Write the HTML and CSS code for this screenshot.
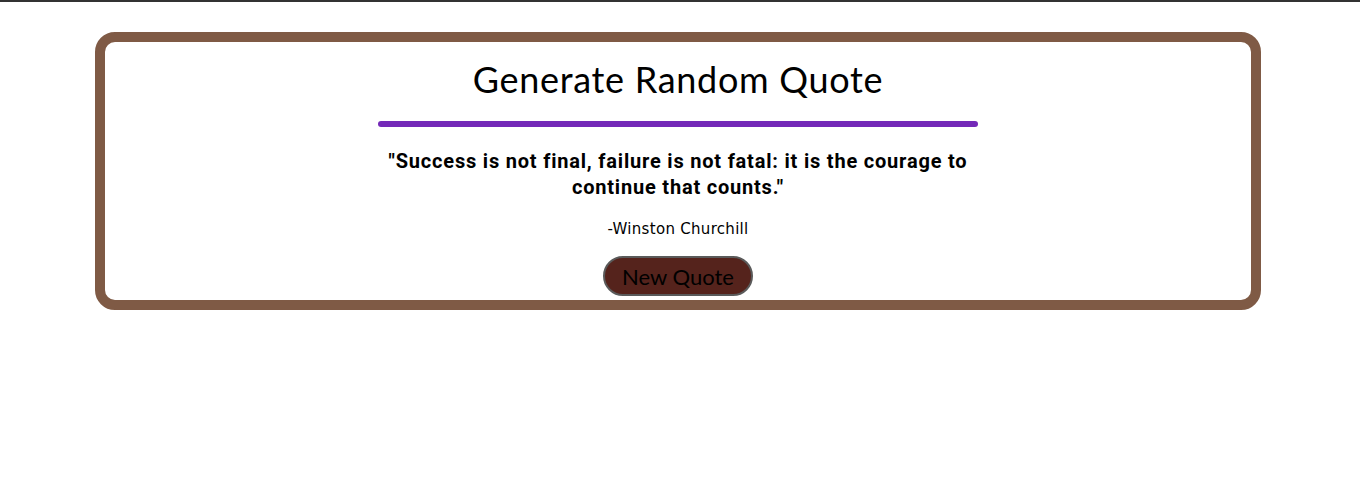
FILE: index.html
```html
<!DOCTYPE html>
<html>
<head>
<meta charset="utf-8">
<link rel="stylesheet" href="styles.css">
</head>
<body>
<div class="topline"></div>
<main class="card">
  <h1 class="title">Generate Random Quote</h1>
  <div class="bar"></div>
  <p class="quote">"Success is not final, failure is not fatal: it is the courage to continue that counts."</p>
  <p class="author">-Winston Churchill</p>
  <button class="btn">New Quote</button>
</main>
</body>
</html>
```
FILE: styles.css
```css
html, body {
  margin: 0;
  padding: 0;
  background: #ffffff;
}
body {
  width: 1360px;
  height: 486px;
  overflow: hidden;
}
.topline {
  height: 2px;
  background: #333333;
}
.card {
  box-sizing: border-box;
  margin: 30px 0 0 95px;
  width: 1166px;
  height: 278px;
  border: 10px solid #7f5a45;
  border-radius: 20px;
  display: flex;
  flex-direction: column;
  align-items: center;
  padding-top: 17px;
}
.title {
  margin: 0;
  font-family: "Lato", "Noto Sans", sans-serif;
  font-weight: 400;
  font-size: 36px;
  line-height: 40px;
  letter-spacing: 0.7px;
  color: #000;
}
.bar {
  width: 600px;
  height: 6px;
  border-radius: 3px;
  background: #7429b8;
  margin-top: 22px;
}
.quote {
  margin: 21px 0 0;
  width: 610px;
  text-align: center;
  font-family: "Roboto", "Liberation Sans", sans-serif;
  font-weight: 700;
  font-size: 20px;
  line-height: 26px;
  letter-spacing: 0.8px;
  color: #000;
}
.author {
  margin: 20px 0 0;
  font-family: "DejaVu Sans", sans-serif;
  font-size: 15px;
  line-height: 18px;
  letter-spacing: 0.3px;
  color: #000;
}
.btn {
  margin-top: 18px;
  width: 150px;
  height: 40px;
  box-sizing: border-box;
  border: 2px solid #5a5a5a;
  border-radius: 20px;
  background: #55231c;
  font-family: "Lato", "Noto Sans", sans-serif;
  font-size: 22px;
  color: #000;
  padding: 0;
}
```
